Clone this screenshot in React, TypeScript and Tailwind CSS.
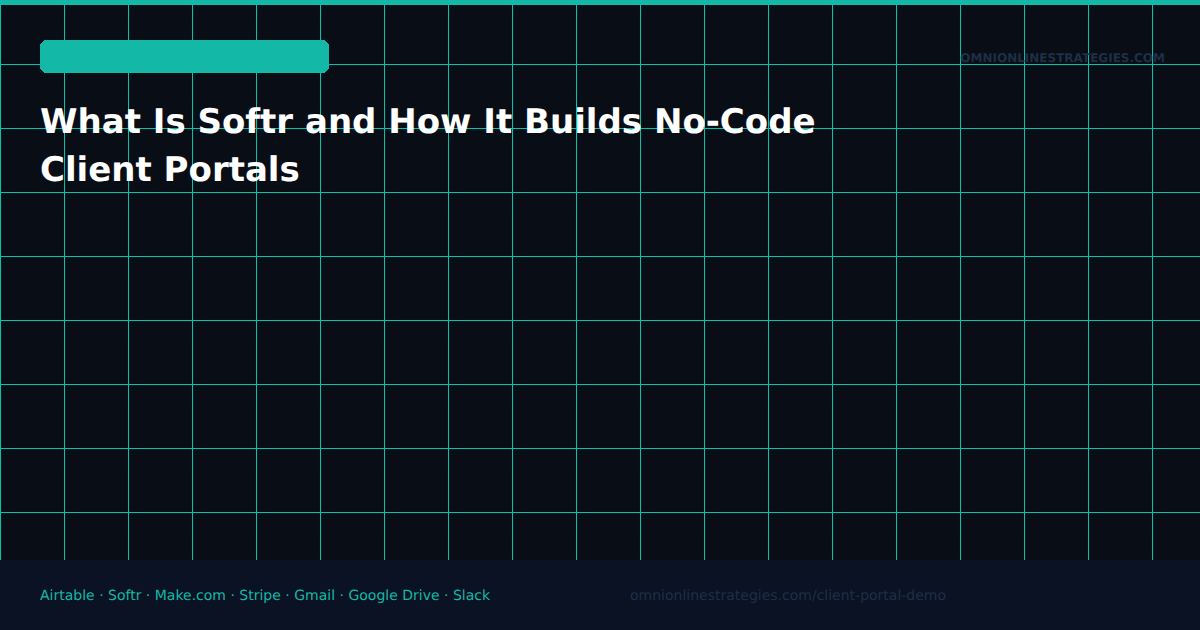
const font = { fontFamily: '"DejaVu Sans", sans-serif' };

export default function App() {
  return (
    <div className="flex h-[630px] w-[1200px] flex-col overflow-hidden bg-[#090d16] [text-rendering:geometricPrecision]" style={font}>
      <div className="h-[560px] bg-[#090d16] bg-[linear-gradient(#00c4ac_1px,transparent_1px),linear-gradient(90deg,#00c4ac_1px,transparent_1px)] bg-[size:64px_64px]">
        <div className="h-[5px] bg-[#14b8a6]" />
        <div className="px-10 pt-[35px]">
          <div className="flex items-start justify-between">
            <div className="h-[33px] w-[289px] bg-[#14b8a6] [clip-path:polygon(4px_0,285px_0,285px_1px,286px_1px,286px_2px,287px_2px,287px_3px,288px_3px,288px_4px,289px_4px,289px_29px,288px_29px,288px_30px,287px_30px,287px_31px,286px_31px,286px_32px,285px_32px,285px_33px,4px_33px,4px_32px,3px_32px,3px_31px,2px_31px,2px_30px,1px_30px,1px_29px,0_29px,0_4px,1px_4px,1px_3px,2px_3px,2px_2px,3px_2px,3px_1px,4px_1px)]" />
            <div className="mt-[11px] mr-[-5px] text-[12px] leading-[14px] font-bold text-[#1e2f47]">
              OMNIONLINESTRATEGIES.COM
            </div>
          </div>
          <h1 className="mt-[25px] w-[800px] text-[34px] leading-[48px] font-bold text-white">
            What Is Softr and How It Builds No-Code Client Portals
          </h1>
        </div>
      </div>
      <div className="flex h-[70px] items-center bg-[#0a1224] px-10 pt-[2px] text-[14px]">
        <div className="w-[590px] text-[#14b8a6]">Airtable · Softr · Make.com · Stripe · Gmail · Google Drive · Slack</div>
        <div className="text-[#1e2f47]">omnionlinestrategies.com/client-portal-demo</div>
      </div>
    </div>
  );
}
